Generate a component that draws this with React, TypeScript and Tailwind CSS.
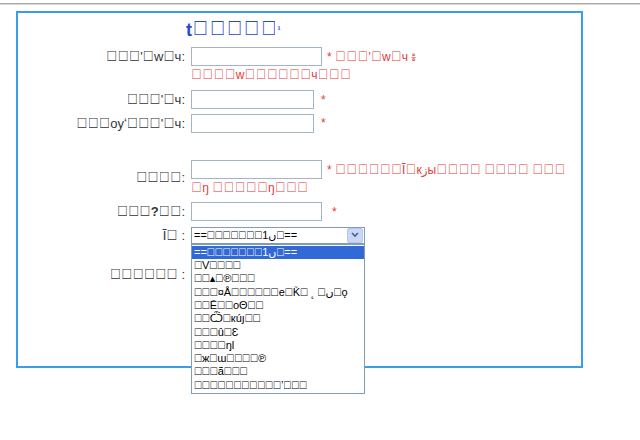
import React from 'react';

// the source page was shown with a font lacking its glyphs, so most letters show as empty boxes
type Kind = 'label' | 'red' | 'list' | 'title';

const boxWidth: Record<Kind, string> = {
  label: 'w-[0.87em]',
  red: 'w-[0.93em]',
  list: 'w-[0.72em]',
  title: 'w-[0.95em]',
};

function Box({ kind }: { kind: Kind }) {
  return (
    <span className={`inline-block text-center ${boxWidth[kind]}`}>
      {kind === 'list' ? (
        <span className="inline-block text-[1em] leading-none font-normal scale-y-[1.15] origin-bottom">□</span>
      ) : (
        <span className="inline-block text-[1.1em] leading-none font-normal scale-y-[1.2] origin-bottom">□</span>
      )}
    </span>
  );
}

function k(s: string, kind: Kind = 'label') {
  const parts = s.split('#');
  const out: React.ReactNode[] = [];
  parts.forEach((p, i) => {
    if (i > 0) out.push(<Box key={`b${i}`} kind={kind} />);
    if (p) out.push(p);
  });
  return out;
}

const options = [
  '==#######ں1#==',
  '#V####',
  '##▴#℗###',
  '###¤Å######e#Ǩ# ˛ #ں#ǫ',
  '##Ē##oΘ##',
  '##Ѽ#кúյ##',
  '###û#Ɛ',
  '####ŋl',
  '#ж#ɯ####℗',
  '###ã###',
  '###########’###',
];

function Field({ w = 'w-[131px]' }: { w?: string }) {
  return <input type="text" className={`${w} h-[19px] border border-[#a3b3c9] bg-white outline-none`} />;
}

function Label({ children }: { children: React.ReactNode }) {
  return <div className="w-[173px] pr-[6px] text-right text-[13px] text-[#333] whitespace-nowrap">{children}</div>;
}

export default function App() {
  return (
    <div className="w-[640px] h-[440px] bg-white overflow-hidden font-['Liberation_Sans','DejaVu_Sans',sans-serif] text-[12px] text-[#333]">
      <div className="h-[3px]" />
      <div className="h-[2px] bg-[#a8a8a8] border-b border-[#d8d8d8]" />
      <div className="relative ml-[16px] mt-[6px] w-[567px] h-[357px] border-2 border-[#3a9de8]">
        <div className="pt-[6px] pl-[168px] h-[25px] text-[18px] font-bold text-[#2646d4] leading-[22px] whitespace-nowrap">
          {k('t#####', 'title')}<span className="text-[9px] align-top">¹</span>
        </div>

        {/* row 1 */}
        <div className="mt-[9px] flex">
          <div className="leading-[19px]">
            <Label>{k("###'#w#ч:")}</Label>
          </div>
          <div>
            <div className="flex items-center">
              <Field />
              <span className="ml-[5px] text-[#e53b3b] whitespace-nowrap">{k("* ###'#w#ч ៖", 'red')}</span>
            </div>
            <div className="mt-[2px] text-[#e53b3b] leading-[14px] whitespace-nowrap">{k('####w######ч###', 'red')}</div>
          </div>
        </div>

        {/* row 2 */}
        <div className="mt-[8px] flex items-center">
          <Label>{k("###'#ч:")}</Label>
          <Field w="w-[123px]" />
          <span className="ml-[7px] text-[#e53b3b]">*</span>
        </div>

        {/* row 3 */}
        <div className="mt-[4px] flex items-center">
          <Label>{k("###oyʻ###'#ч:")}</Label>
          <Field w="w-[123px]" />
          <span className="ml-[7px] text-[#e53b3b]">*</span>
        </div>

        {/* row 4 */}
        <div className="mt-[27px] flex items-center">
          <Label>{k('####:')}</Label>
          <div>
            <div className="flex items-center">
              <Field />
              <span className="ml-[5px] text-[#e53b3b] whitespace-nowrap">{k('* ######Ĩ#кزы#### #### ###', 'red')}</span>
            </div>
            <div className="mt-[2px] text-[#e53b3b] leading-[14px] whitespace-nowrap">{k('#ŋ #####ŋ###', 'red')}</div>
          </div>
        </div>

        {/* row 5 */}
        <div className="mt-[7px] flex items-center">
          <Label>{k('###')}<b>?</b>{k('##:')}</Label>
          <Field />
          <span className="ml-[10px] text-[#e53b3b]">*</span>
        </div>

        {/* row 6: select, opened */}
        <div className="mt-[4px] flex items-center">
          <Label>{k('Ĩ# :')}</Label>
          <div className="relative">
            <div className="w-[174px] h-[17px] border border-[#7f9db9] bg-white flex items-center justify-between">
              <span className="pl-[2px] text-[11px] leading-[15px] text-black whitespace-nowrap">{k(options[0], 'list')}</span>
              <span className="w-[16px] h-[15px] mr-px bg-[#c7d7f5] border border-[#b6c8ee] rounded-[2px] flex items-center justify-center">
                <svg width="8" height="6" viewBox="0 0 8 6">
                  <path d="M1 1 L4 4 L7 1" fill="none" stroke="#4d6185" strokeWidth="1.6" />
                </svg>
              </span>
            </div>
            <div className="absolute z-10 left-0 top-[17px] w-[174px] border border-[#7f9db9] bg-white py-px">
              {options.map((o, i) => (
                <div
                  key={i}
                  className={`h-[13.3px] pl-[2px] text-[11px] leading-[13px] whitespace-nowrap ${i === 0 ? 'bg-[#3169d6] text-white' : 'text-black'}`}
                >
                  {k(o, 'list')}
                </div>
              ))}
            </div>
          </div>
        </div>

        {/* row 7 */}
        <div className="mt-[20px] flex items-center">
          <Label>{k('###### :')}</Label>
          <input type="text" className="w-[170px] h-[19px] border border-[#a3b3c9] bg-white outline-none" />
        </div>
      </div>
    </div>
  );
}
